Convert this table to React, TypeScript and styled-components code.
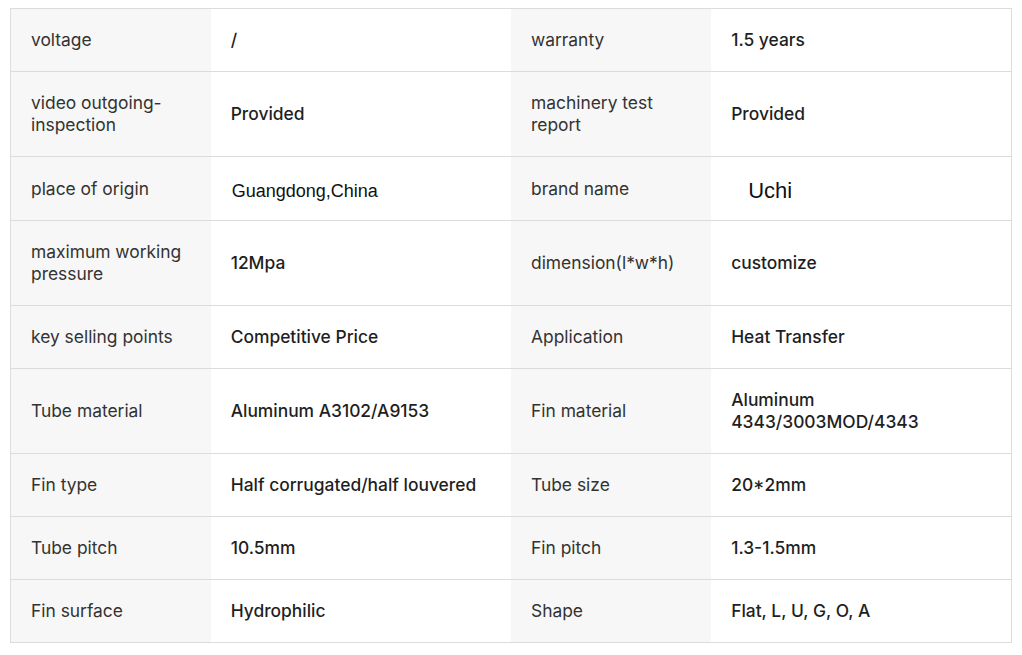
import * as React from 'react';
import styled, { createGlobalStyle } from 'styled-components';

const GlobalStyle = createGlobalStyle`
    html, body {
        margin: 0;
        padding: 0;
        background: #fff;
    }
    body {
        font-family: Inter, "Noto Sans", sans-serif;
    }
`;

const Wrap = styled.div`
    padding: 8px 10px;
`;

const Table = styled.table`
    width: 1002px;
    border-collapse: collapse;
    table-layout: fixed;
    border: 1px solid #dcdcdc;
    font-size: 17.4px;
    line-height: 22px;
`;

const Row = styled.tr`
    border-bottom: 1px solid #dcdcdc;
`;

const Label = styled.td`
    padding: 20px;
    background: #f7f7f7;
    color: #333;
    vertical-align: middle;
`;

const Value = styled.td`
    padding: 20px;
    background: #fff;
    color: #1f1f1f;
    font-weight: 500;
    vertical-align: middle;
`;

// text pasted in from elsewhere keeps its own font and size
const Pasted = styled.span<{ $size: number; $indent?: number; $shift: number }>`
    font-family: "Liberation Sans", Arial, sans-serif;
    font-weight: 400;
    font-size: ${p => p.$size}px;
    line-height: 1;
    color: #111;
    padding-left: ${p => p.$indent || 0}px;
    position: relative;
    top: ${p => p.$shift}px;
`;

type Cell = React.ReactNode;
const rows: [Cell, Cell, Cell, Cell][] = [
    ['voltage', '/', 'warranty', '1.5 years'],
    ['video outgoing-inspection', 'Provided', 'machinery test report', 'Provided'],
    [
        'place of origin',
        <Pasted $size={18} $indent={1} $shift={2}>Guangdong,China</Pasted>,
        'brand name',
        <Pasted $size={22} $indent={17} $shift={3}>Uchi</Pasted>,
    ],
    ['maximum working pressure', '12Mpa', 'dimension(l*w*h)', 'customize'],
    ['key selling points', 'Competitive Price', 'Application', 'Heat Transfer'],
    ['Tube material', 'Aluminum A3102/A9153', 'Fin material', 'Aluminum 4343/3003MOD/4343'],
    ['Fin type', 'Half corrugated/half louvered', 'Tube size', '20*2mm'],
    ['Tube pitch', '10.5mm', 'Fin pitch', '1.3-1.5mm'],
    ['Fin surface', 'Hydrophilic', 'Shape', 'Flat, L, U, G, O, A'],
];

export default (() => {
    return (
        <Wrap>
            <GlobalStyle />
            <Table>
                <colgroup>
                    <col style={{ width: '20%' }} />
                    <col style={{ width: '30%' }} />
                    <col style={{ width: '20%' }} />
                    <col style={{ width: '30%' }} />
                </colgroup>
                <tbody>
                    {rows.map((r, i) => (
                        <Row key={i}>
                            <Label>{r[0]}</Label>
                            <Value>{r[1]}</Value>
                            <Label>{r[2]}</Label>
                            <Value>{r[3]}</Value>
                        </Row>
                    ))}
                </tbody>
            </Table>
        </Wrap>
    );
}) as React.FC;
